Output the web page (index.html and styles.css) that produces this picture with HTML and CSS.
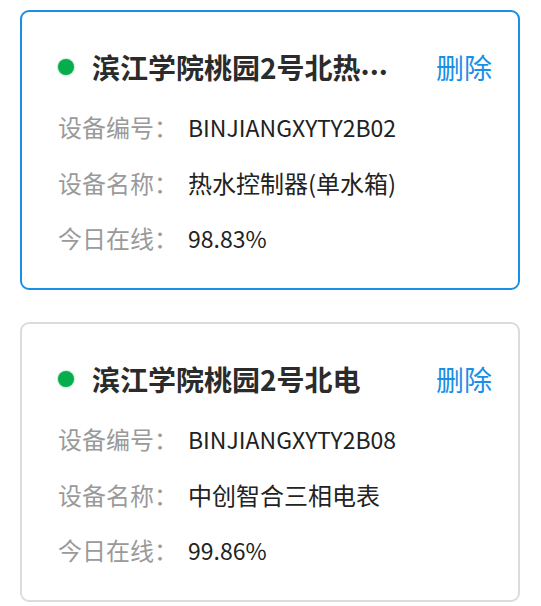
FILE: index.html
```html
<!DOCTYPE html>
<html lang="zh-CN">
<head>
<meta charset="utf-8">
<title>设备列表</title>
<link rel="stylesheet" href="styles.css">
</head>
<body>
<div class="list">
  <div class="card card-active">
    <div class="head">
      <span class="dot"></span>
      <span class="title">滨江学院桃园2号北热<span class="more">...</span></span>
      <span class="del">删除</span>
    </div>
    <div class="row"><span class="label">设备编号：</span><span class="value latin">BINJIANGXYTY2B02</span></div>
    <div class="row"><span class="label">设备名称：</span><span class="value">热水控制器(单水箱)</span></div>
    <div class="row"><span class="label">今日在线：</span><span class="value latin">98.83%</span></div>
  </div>
  <div class="card">
    <div class="head">
      <span class="dot"></span>
      <span class="title">滨江学院桃园2号北电</span>
      <span class="del">删除</span>
    </div>
    <div class="row"><span class="label">设备编号：</span><span class="value latin">BINJIANGXYTY2B08</span></div>
    <div class="row"><span class="label">设备名称：</span><span class="value">中创智合三相电表</span></div>
    <div class="row"><span class="label">今日在线：</span><span class="value latin">99.86%</span></div>
  </div>
</div>
</body>
</html>
```
FILE: styles.css
```css
* { box-sizing: border-box; }
html, body { margin: 0; padding: 0; background: #fff; }
body {
  font-family: "Noto Sans CJK SC", sans-serif;
  color: #333;
}
.list {
  display: flex;
  flex-direction: column;
  gap: 32px;
  padding: 10px 21px 0 20px;
}
.card {
  height: 280px;
  border: 2px solid #dcdcdc;
  border-radius: 9px;
  padding: 36px 26px 0 36px;
  background: #fff;
}
.card-active { border-color: #1a8fe6; }
.head {
  display: flex;
  align-items: center;
  height: 38px;
  margin-bottom: 13px;
}
.dot {
  flex: none;
  width: 16px;
  height: 16px;
  border-radius: 50%;
  background: #05ad4c;
  box-shadow: 0 0 1px 1px rgba(5, 173, 76, 0.25);
}
.title {
  flex: 1;
  min-width: 0;
  margin-left: 18px;
  margin-right: 30px;
  font-size: 28px;
  font-weight: 700;
  color: #2b2b2b;
  white-space: nowrap;
  line-height: 38px;
}
.more {
  display: inline-block;
  transform: translateY(-4px);
}
.del {
  flex: none;
  font-size: 28px;
  color: #1a8fe6;
  line-height: 38px;
}
.row {
  display: flex;
  align-items: center;
  height: 55.5px;
  font-size: 24px;
}
.label {
  width: 130px;
  flex: none;
  color: #9a9a9a;
}
.value {
  color: #222;
}
.latin {
  font-size: 23px;
}
```
